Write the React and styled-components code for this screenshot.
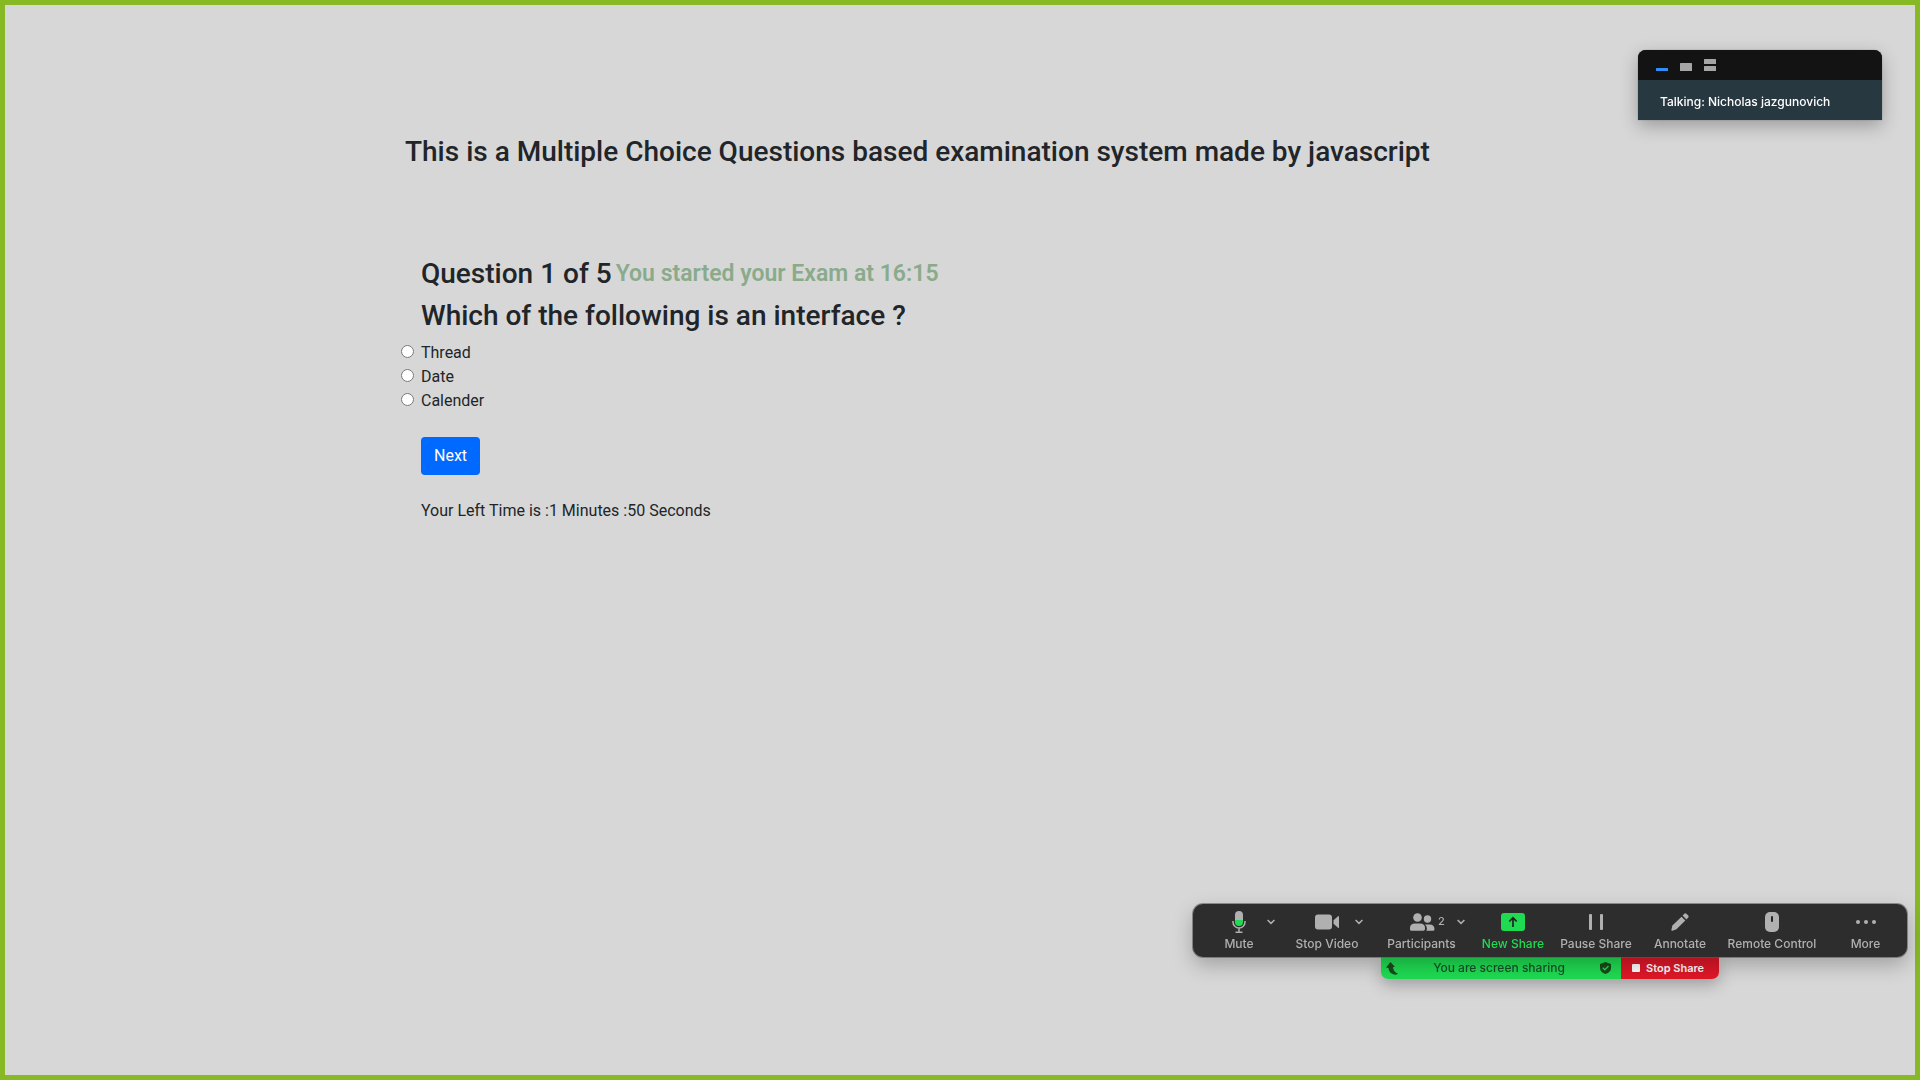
import React, { useState } from "react";
import styled, { createGlobalStyle } from "styled-components";

const GlobalStyle = createGlobalStyle`
  *, *::before, *::after { box-sizing: border-box; }
  body {
    margin: 0;
    background: #d7d7d7;
    color: #212529;
    font-family: Inter, "Liberation Sans", sans-serif;
    font-size: 16px;
    line-height: 24px;
  }
  button { font: inherit; border: 0; cursor: pointer; }
`;

const Screen = styled.div`
  min-height: 100vh;
  border: 5px solid #86b924;
`;

const Container = styled.main`
  max-width: 1140px;
  margin: 0 auto;
  padding: 130px 15px 48px;
  font-family: Roboto, "Liberation Sans", sans-serif;
`;

const Heading = styled.h3`
  margin: 0 0 8px;
  font-size: 28px;
  font-weight: 500;
  line-height: 34px;
`;

const Exam = styled.form`
  padding: 80px 16px 0;
  margin: 0;
`;

const QuestionRow = styled.div`
  display: flex;
  align-items: flex-start;
  gap: 4px;
`;

const Started = styled.span`
  color: #8aab8b;
  font-size: 23px;
  font-weight: 600;
  line-height: 34px;
`;

const Options = styled.fieldset`
  margin: 0;
  padding: 0;
  border: 0;
`;

const Option = styled.label`
  display: flex;
  align-items: center;
  gap: 7px;
  width: max-content;
  margin-left: -20px;
`;

const Radio = styled.input`
  width: 13px;
  height: 13px;
  margin: 0 0 4px;
`;

const NextButton = styled.button`
  display: block;
  margin: 24px 0;
  padding: 7px 13px;
  border-radius: 4px;
  background: #0069ff;
  color: #fff;
`;

const TimeLeft = styled.p`
  margin: 0;
`;

const TalkingWindow = styled.aside`
  position: fixed;
  top: 50px;
  right: 38px;
  width: 244px;
  border-radius: 8px 8px 0 0;
  overflow: hidden;
  background: #283841;
  box-shadow: 0 6px 18px rgba(0, 0, 0, 0.28), 0 0 1px rgba(0, 0, 0, 0.6);
`;

const WindowBar = styled.div`
  display: flex;
  align-items: flex-end;
  gap: 12px;
  height: 30px;
  padding: 0 18px 9px;
  background: #131313;
`;

const ViewButton = styled.button`
  display: grid;
  padding: 0;
  background: none;
  color: ${(p) => (p.$active ? "#2f8ef7" : "#a6a6a6")};
`;

const Talking = styled.p`
  margin: 0;
  padding: 10px 22px 6px;
  color: #fff;
  font-size: 12px;
  font-weight: 500;
`;

const ShareControls = styled.div`
  position: fixed;
  right: 13px;
  bottom: 101px;
  width: 714px;
  display: flex;
  flex-direction: column;
  align-items: center;
`;

const Toolbar = styled.div`
  position: relative;
  z-index: 1;
  width: 100%;
  display: grid;
  grid-template-columns: 92fr 84fr 105fr 78fr 88fr 80fr 104fr 83fr;
  height: 53px;
  border-radius: 10px;
  background: #2d2d2d;
  box-shadow: 0 0 0 1px rgba(90, 90, 90, 0.6), 0 8px 20px rgba(0, 0, 0, 0.25);
`;

const Cell = styled.div`
  display: grid;
  grid-template: 36px 1fr / 1fr;
`;

const Tool = styled.button`
  grid-area: 1 / 1 / 3 / 2;
  display: flex;
  flex-direction: column;
  align-items: center;
  padding: 6px 0 0;
  background: none;
  color: ${(p) => (p.$green ? "#1fdb52" : "#b0b0b0")};
  font-size: 12px;
  font-weight: 500;
  line-height: 20px;
  white-space: nowrap;
`;

const IconRow = styled.span`
  display: grid;
  place-items: center;
  height: 24px;
`;

const Chevron = styled.button`
  grid-area: 1 / 1;
  justify-self: center;
  align-self: center;
  display: grid;
  margin-left: ${(p) => (p.$wide ? 78 : 64)}px;
  padding: 4px;
  background: none;
  color: #b0b0b0;
`;

const ShareStrip = styled.div`
  display: flex;
  width: 338px;
  height: 22px;
  border-radius: 0 0 7px 7px;
  overflow: hidden;
  box-shadow: 0 6px 16px rgba(0, 0, 0, 0.25);
`;

const Status = styled.div`
  flex: 1;
  display: flex;
  align-items: center;
  justify-content: space-between;
  padding: 0 10px 0 5px;
  background: #1fdb52;
  color: #17502a;
  font-size: 12px;
  font-weight: 500;
`;

const StopShare = styled.button`
  display: flex;
  align-items: center;
  gap: 6px;
  width: 98px;
  padding: 0 11px;
  background: #df1728;
  color: #fff;
  font-size: 11px;
  font-weight: 600;
  white-space: nowrap;
`;

const StopSquare = styled.span`
  width: 8px;
  height: 8px;
  border-radius: 1px;
  background: #fff;
`;

const MicIcon = () => (
  <svg width="14" height="22" viewBox="0 0 14 22" aria-hidden="true">
    <path d="M3 9V4a4 4 0 0 1 8 0v5z" fill="#b0b0b0" />
    <path d="M3 9h8v2a4 4 0 0 1-8 0z" fill="#1fdb52" />
    <path d="M1 10v1a6 6 0 0 0 12 0v-1M7 17v4M3.5 21.2h7" fill="none" stroke="#b0b0b0" strokeWidth="1.5" />
  </svg>
);

const VideoIcon = () => (
  <svg width="24" height="16" viewBox="0 0 24 16" fill="currentColor" aria-hidden="true">
    <rect y="0.5" width="17" height="15" rx="3" />
    <path d="M18.5 6.3 23 2.2q1-.7 1 .6v10.4q0 1.3-1 .6l-4.5-4.1z" />
  </svg>
);

const PeopleIcon = () => (
  <svg width="58" height="20" viewBox="-9 0 58 20" fill="currentColor" aria-hidden="true">
    <circle cx="15.5" cy="5.5" r="4.3" />
    <path d="M8 17.5v-1.5q0-4.5 5-4.5h5q5 0 5 4.5v1q0 1.7-1.7 1.7H9.5q-1.5 0-1.5-1.2z" />
    <circle cx="25.5" cy="7" r="3.7" />
    <path d="M23 12.5h4.5q5 0 5 4.7 0 1.5-1.5 1.5h-6.8q.9-.8.7-2.5-.1-2.2-1.900-3.700z" />
    <text x="36" y="13" fontSize="11" fontWeight="500">2</text>
  </svg>
);

const NewShareIcon = () => (
  <svg width="24" height="18" viewBox="0 0 24 18" aria-hidden="true">
    <rect width="24" height="18" rx="3" fill="currentColor" />
    <path d="M12 14V5M8.3 8.5 12 4.8l3.7 3.7" fill="none" stroke="#232323" strokeWidth="1.7" />
  </svg>
);

const PauseIcon = () => (
  <svg width="14" height="16" viewBox="0 0 14 16" fill="currentColor" aria-hidden="true">
    <rect width="3" height="16" rx="1" />
    <rect x="11" width="3" height="16" rx="1" />
  </svg>
);

const PencilIcon = () => (
  <svg width="18" height="18" viewBox="0 0 18 18" fill="currentColor" aria-hidden="true">
    <path d="M10.5 3.7 14.3 7.5 5.5 16.2 1.4 17.7Q.2 18 .4 16.7l1-4.2z" />
    <path d="M11.6 2.6 13.4.8q1-.9 2 0l1.8 1.8q.9 1 0 2l-1.8 1.8z" />
  </svg>
);

const MouseIcon = () => (
  <svg width="14" height="20" viewBox="0 0 14 20" aria-hidden="true">
    <rect width="14" height="20" rx="5" fill="currentColor" />
    <rect x="6" y="4" width="2" height="6" rx="1" fill="#232323" />
  </svg>
);

const DotsIcon = () => (
  <svg width="20" height="4" viewBox="0 0 20 4" fill="currentColor" aria-hidden="true">
    <circle cx="2" cy="2" r="2" />
    <circle cx="10" cy="2" r="2" />
    <circle cx="18" cy="2" r="2" />
  </svg>
);

const ChevronIcon = () => (
  <svg width="8" height="6" viewBox="0 0 8 6" fill="none" stroke="currentColor" strokeWidth="1.5" aria-hidden="true">
    <path d="M.6 1 4 4.4 7.4 1" />
  </svg>
);

const CursorArrowIcon = () => (
  <svg width="12" height="13" viewBox="0 0 12 13" fill="#1c4a1c" aria-hidden="true">
    <path d="M4.5 0 9 5H7q0 4.5 5 6.7-2 1.3-4 .8Q2.7 11 2.5 6L0 5.500z" />
  </svg>
);

const ShieldIcon = () => (
  <svg width="11" height="12" viewBox="0 0 11 12" aria-hidden="true">
    <path d="M5.5 0 11 2v4q0 4-5.5 6Q0 10 0 6V2z" fill="#1c4a1c" />
    <path d="M2.8 5.8 4.8 7.8 8.5 4" fill="none" stroke="#1fdb52" strokeWidth="1.4" />
  </svg>
);

const tools = [
  { label: "Mute", Icon: MicIcon, menu: true },
  { label: "Stop Video", Icon: VideoIcon, menu: true },
  { label: "Participants", Icon: PeopleIcon, menu: true, wide: true },
  { label: "New Share", Icon: NewShareIcon, green: true },
  { label: "Pause Share", Icon: PauseIcon },
  { label: "Annotate", Icon: PencilIcon },
  { label: "Remote Control", Icon: MouseIcon },
  { label: "More", Icon: DotsIcon },
];

const views = [
  { name: "Minimize", active: true, rects: [[9, 3]] },
  { name: "Single view", rects: [[4, 8]] },
  { name: "Stacked view", rects: [[0, 5], [7, 5]] },
];

export default function App() {
  const [answer, setAnswer] = useState("");
  return (
    <Screen>
      <GlobalStyle />
      <Container>
        <Heading>This is a Multiple Choice Questions based examination system made by javascript</Heading>
        <Exam onSubmit={(e) => e.preventDefault()}>
          <QuestionRow>
            <Heading>Question 1 of 5</Heading>
            <Started>You started your Exam at 16:15</Started>
          </QuestionRow>
          <Heading>Which of the following is an interface ?</Heading>
          <Options aria-label="Answers">
            {["Thread", "Date", "Calender"].map((o) => (
              <Option key={o}>
                <Radio type="radio" name="answer" checked={answer === o} onChange={() => setAnswer(o)} />
                {o}
              </Option>
            ))}
          </Options>
          <NextButton type="submit">Next</NextButton>
          <TimeLeft>Your Left Time is :1 Minutes :50 Seconds</TimeLeft>
        </Exam>
      </Container>

      <TalkingWindow>
        <WindowBar>
          {views.map((v) => (
            <ViewButton key={v.name} type="button" aria-label={v.name} $active={v.active}>
              <svg width="12" height="12" viewBox="0 0 12 12" fill="currentColor">
                {v.rects.map(([y, h]) => (
                  <rect key={y} y={y} width="12" height={h} rx="0.5" />
                ))}
              </svg>
            </ViewButton>
          ))}
        </WindowBar>
        <Talking>Talking: Nicholas jazgunovich</Talking>
      </TalkingWindow>

      <ShareControls>
        <Toolbar>
          {tools.map(({ label, Icon, menu, wide, green }) => (
            <Cell key={label}>
              <Tool type="button" $green={green}>
                <IconRow><Icon /></IconRow>
                {label}
              </Tool>
              {menu && (
                <Chevron type="button" aria-label={label + " options"} $wide={wide}>
                  <ChevronIcon />
                </Chevron>
              )}
            </Cell>
          ))}
        </Toolbar>
        <ShareStrip>
          <Status>
            <CursorArrowIcon />
            <span>You are screen sharing</span>
            <ShieldIcon />
          </Status>
          <StopShare type="button"><StopSquare />Stop Share</StopShare>
        </ShareStrip>
      </ShareControls>
    </Screen>
  );
}
